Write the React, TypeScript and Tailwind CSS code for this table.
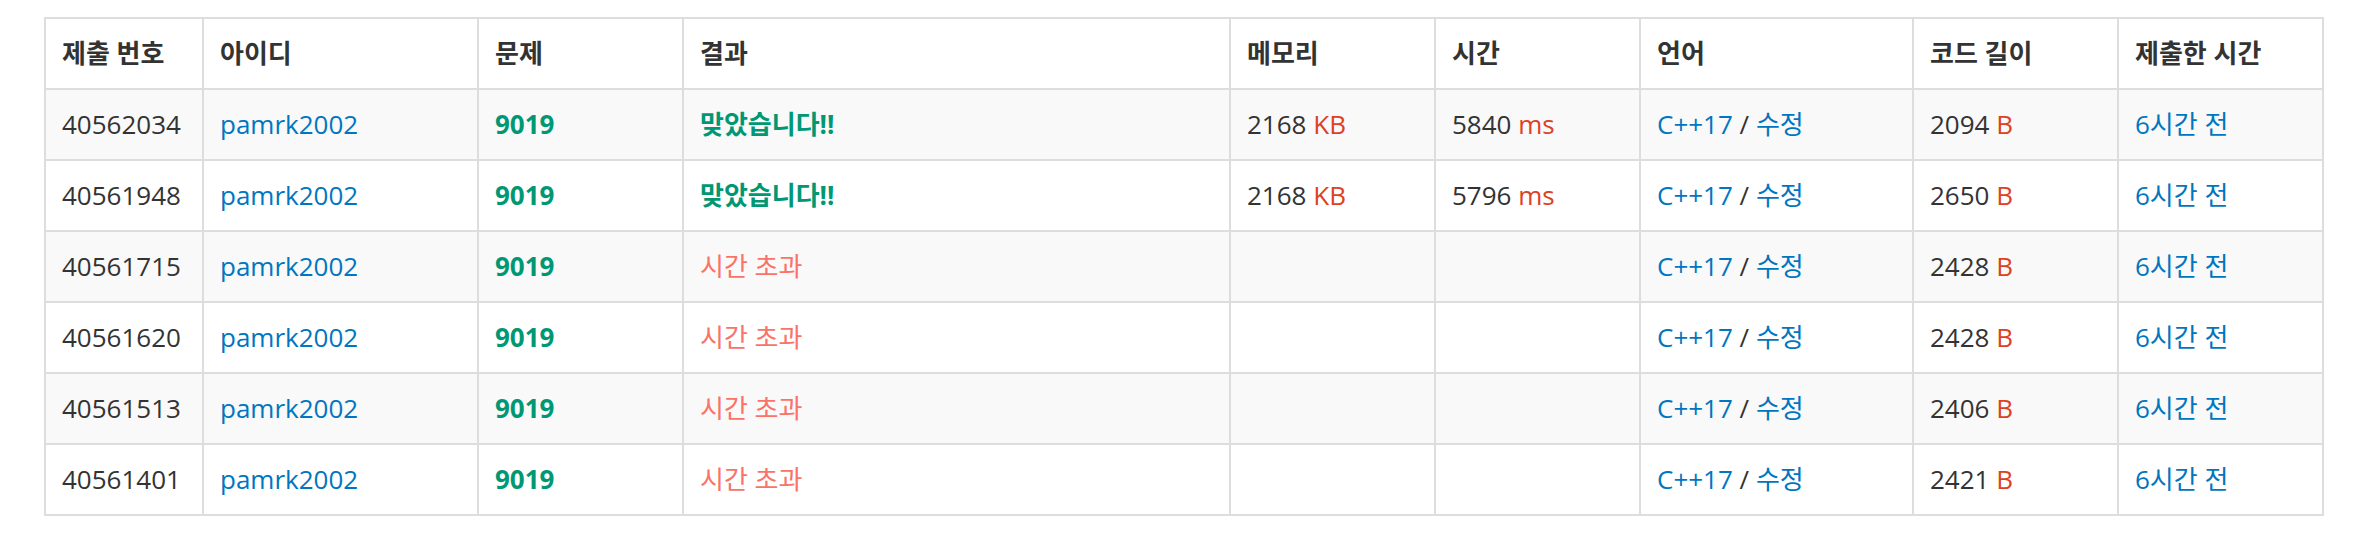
import React from 'react';

interface Submission {
  id: string;
  user: string;
  problem: string;
  result: 'ac' | 'tle';
  memory?: string;
  time?: string;
  lang: string;
  length: string;
  ago: string;
}

const rows: Submission[] = [
  { id: '40562034', user: 'pamrk2002', problem: '9019', result: 'ac', memory: '2168', time: '5840', lang: 'C++17', length: '2094', ago: '6시간 전' },
  { id: '40561948', user: 'pamrk2002', problem: '9019', result: 'ac', memory: '2168', time: '5796', lang: 'C++17', length: '2650', ago: '6시간 전' },
  { id: '40561715', user: 'pamrk2002', problem: '9019', result: 'tle', lang: 'C++17', length: '2428', ago: '6시간 전' },
  { id: '40561620', user: 'pamrk2002', problem: '9019', result: 'tle', lang: 'C++17', length: '2428', ago: '6시간 전' },
  { id: '40561513', user: 'pamrk2002', problem: '9019', result: 'tle', lang: 'C++17', length: '2406', ago: '6시간 전' },
  { id: '40561401', user: 'pamrk2002', problem: '9019', result: 'tle', lang: 'C++17', length: '2421', ago: '6시간 전' },
];

const headers = ['제출 번호', '아이디', '문제', '결과', '메모리', '시간', '언어', '코드 길이', '제출한 시간'];

const cell = 'border-2 border-[#dddddd] px-4 py-4 text-left align-top leading-[37px] whitespace-nowrap';

export default function App() {
  return (
    <div
      className="w-[2378px] h-[560px] bg-white pt-[17px] pl-[44px] text-[26px] text-[#333333]"
      style={{ fontFamily: '"Open Sans", "Noto Sans CJK KR", sans-serif' }}
    >
      <table className="table-fixed border-collapse w-[2278px] border-2 border-[#dddddd]">
        <colgroup>
          <col className="w-[158px]" />
          <col className="w-[275px]" />
          <col className="w-[205px]" />
          <col className="w-[547px]" />
          <col className="w-[205px]" />
          <col className="w-[205px]" />
          <col className="w-[273px]" />
          <col className="w-[205px]" />
          <col className="w-[205px]" />
        </colgroup>
        <thead>
          <tr>
            {headers.map((h) => (
              <th key={h} className={`${cell} font-bold`}>
                {h}
              </th>
            ))}
          </tr>
        </thead>
        <tbody>
          {rows.map((r, i) => (
            <tr key={r.id} className={i % 2 === 0 ? 'bg-[#f9f9f9]' : 'bg-white'}>
              <td className={cell}>{r.id}</td>
              <td className={cell}>
                <a className="text-[#0076c0]">{r.user}</a>
              </td>
              <td className={cell}>
                <a className="font-bold text-[#009874]">{r.problem}</a>
              </td>
              <td className={cell}>
                {r.result === 'ac' ? (
                  <span className="font-bold text-[#009874]">맞았습니다!!</span>
                ) : (
                  <span className="text-[#fa7268]">시간 초과</span>
                )}
              </td>
              <td className={cell}>
                {r.memory && (
                  <>
                    {r.memory} <span className="text-[#dd4124]">KB</span>
                  </>
                )}
              </td>
              <td className={cell}>
                {r.time && (
                  <>
                    {r.time} <span className="text-[#dd4124]">ms</span>
                  </>
                )}
              </td>
              <td className={cell}>
                <a className="text-[#0076c0]">{r.lang}</a> / <a className="text-[#0076c0]">수정</a>
              </td>
              <td className={cell}>
                {r.length} <span className="text-[#dd4124]">B</span>
              </td>
              <td className={cell}>
                <a className="text-[#0076c0]">{r.ago}</a>
              </td>
            </tr>
          ))}
        </tbody>
      </table>
    </div>
  );
}
